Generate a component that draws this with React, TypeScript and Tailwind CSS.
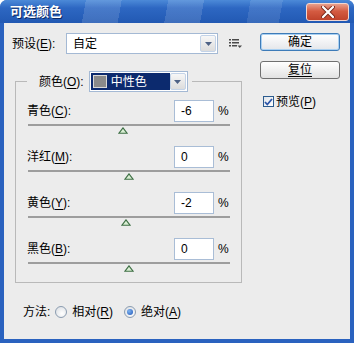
type SliderRow = {
  label: string;
  hotkey: string;
  value: string;
  thumbClass: string;
};

const rows: SliderRow[] = [
  { label: "青色", hotkey: "C", value: "-6", thumbClass: "ml-[91px]" },
  { label: "洋红", hotkey: "M", value: "0", thumbClass: "ml-[97px]" },
  { label: "黄色", hotkey: "Y", value: "-2", thumbClass: "ml-[94px]" },
  { label: "黑色", hotkey: "B", value: "0", thumbClass: "ml-[97px]" },
];

function Hotkey({ text, k }: { text: string; k: string }) {
  return (
    <span>
      {text}(<span className="underline underline-offset-2">{k}</span>)
    </span>
  );
}

function DropArrow() {
  return (
    <div className="flex h-full w-[16px] items-center justify-center rounded-[2px] border border-[#c3d3e8] bg-[linear-gradient(180deg,#f7f7f7,#dcdcdc)]">
      <svg width="7" height="4" viewBox="0 0 7 4">
        <path d="M0 0h7L3.5 4z" fill="#4d6185" />
      </svg>
    </div>
  );
}

function SliderBlock({ row }: { row: SliderRow }) {
  return (
    <div className="mb-[12px] last:mb-0">
      <div className="flex h-[22px] items-center">
        <div className="flex-1">
          <Hotkey text={row.label} k={row.hotkey} />:
        </div>
        <div className="flex h-[22px] w-[40px] items-center border border-[#a9bdd6] bg-white pl-[6px]">
          {row.value}
        </div>
        <div className="w-[16px] pl-[4px]">%</div>
      </div>
      <div className="ml-[1px] mt-[2px] h-[2px] w-[202px] bg-[#9d9d9d]" />
      <div className={`mt-[1px] h-[7px] ${row.thumbClass}`}>
        <svg width="10" height="7" viewBox="0 0 10 7" className="block">
          <path d="M5 0.8L9.2 6.3H0.8z" fill="#d9eed3" stroke="#3f7046" strokeWidth="1.1" />
        </svg>
      </div>
    </div>
  );
}

function Radio({ checked }: { checked: boolean }) {
  return (
    <div className="flex h-[12px] w-[12px] items-center justify-center rounded-full border border-[#8b9cb0] bg-[radial-gradient(circle_at_60%_65%,#ffffff,#d7dbe0)]">
      {checked && (
        <div className="h-[6px] w-[6px] rounded-full bg-[radial-gradient(circle_at_35%_35%,#7fb4f0,#1f55b8)]" />
      )}
    </div>
  );
}

export default function App() {
  return (
    <div className="flex h-[343px] w-[354px] flex-col overflow-hidden rounded-t-[7px] bg-[#2a62bf] font-['Liberation_Sans','Noto_Sans_CJK_SC',sans-serif] text-[12px] text-black">
      {/* title bar */}
      <div className="flex h-[23px] shrink-0 items-center justify-between bg-[linear-gradient(100deg,transparent_0_24%,rgba(255,255,255,0.13)_24%_34%,transparent_34%_47%,rgba(255,255,255,0.13)_47%_57%,transparent_57%_70%,rgba(255,255,255,0.1)_70%_79%,transparent_79%),linear-gradient(180deg,#4c8ad8_0%,#2d67c2_35%,#2259b3_100%)] pl-[10px] pr-[5px]">
        <span className="text-[13px] font-bold text-white [text-shadow:1px_1px_0_#0d2a63]">
          可选颜色
        </span>
        <div className="flex h-[18px] w-[43px] items-center justify-center rounded-[3px] border border-[#f2d6cf] bg-[linear-gradient(180deg,#e9a08c_0%,#d45b42_45%,#c0432c_100%)]">
          <svg width="14" height="12" viewBox="0 0 14 12">
            <path d="M2 1l10 10M12 1L2 11" stroke="#7a2a1c" strokeWidth="4" strokeLinecap="round" />
            <path d="M2 1l10 10M12 1L2 11" stroke="#ffffff" strokeWidth="2.2" strokeLinecap="round" />
          </svg>
        </div>
      </div>

      {/* client area */}
      <div className="mx-[4px] mb-[4px] flex flex-1 bg-[#ececec] pt-[10px]">
        <div className="w-[256px]">
          <div className="flex h-[21px] items-center">
            <div className="w-[62px] pl-[8px]">
              <Hotkey text="预设" k="E" />:
            </div>
            <div className="flex h-[21px] w-[152px] items-center border border-[#a4b9d4] bg-white pl-[6px] pr-[1px]">
              <span className="flex-1">自定</span>
              <div className="h-[17px]">
                <DropArrow />
              </div>
            </div>
            <svg width="13" height="9" viewBox="0 0 13 9" className="ml-[11px]">
              <g fill="#4a4a4a">
                <rect x="0" y="0" width="2" height="1.5" />
                <rect x="3" y="0" width="7" height="1.5" />
                <rect x="0" y="3" width="2" height="1.5" />
                <rect x="3" y="3" width="7" height="1.5" />
                <rect x="0" y="6" width="2" height="1.5" />
                <rect x="3" y="6" width="5" height="1.5" />
                <path d="M8.5 6.5h4.5L10.75 9z" />
              </g>
            </svg>
          </div>

          <fieldset className="ml-[11px] mt-[17px] w-[227px] border border-[#b9b9b9] px-[11px] pb-[10px] pt-[8px]">
            <legend className="flex h-[21px] items-center pl-[12px] pr-[4px]">
              <span className="mr-[5px]">
                <Hotkey text="颜色" k="O" />:
              </span>
              <div className="flex h-[21px] w-[99px] items-center border border-[#a4b9d4] bg-white p-[1px]">
                <div className="flex h-full flex-1 items-center bg-[#0c2a6e] pl-[2px]">
                  <div className="h-[13px] w-[14px] border border-[#d8d8d8] bg-[#8a8a8a]" />
                  <span className="ml-[4px] text-white">中性色</span>
                </div>
                <DropArrow />
              </div>
            </legend>
            {rows.map((row) => (
              <SliderBlock key={row.hotkey} row={row} />
            ))}
          </fieldset>

          <div className="mt-[22px] flex h-[14px] items-center pl-[19px]">
            <span>方法:</span>
            <div className="ml-[5px]">
              <Radio checked={false} />
            </div>
            <span className="ml-[5px]">
              <Hotkey text="相对" k="R" />
            </span>
            <div className="ml-[11px]">
              <Radio checked />
            </div>
            <span className="ml-[5px]">
              <Hotkey text="绝对" k="A" />
            </span>
          </div>
        </div>

        <div className="w-[80px]">
          <button className="flex h-[18px] w-[80px] items-center justify-center rounded-[3px] border border-[#3d7bb8] bg-[linear-gradient(180deg,#ffffff,#e4e6ea)] shadow-[inset_0_0_0_1px_#a9d0f2]">
            确定
          </button>
          <button className="mt-[10px] flex h-[18px] w-[80px] items-center justify-center rounded-[3px] border border-[#707070] bg-[linear-gradient(180deg,#ffffff,#e2e2e2)]">
            <span className="underline underline-offset-2">复位</span>
          </button>
          <div className="mt-[16px] flex h-[13px] items-center">
            <div className="ml-[3px] flex h-[11px] w-[11px] items-center justify-center border border-[#2b5b8e] bg-[linear-gradient(135deg,#e0e4ea,#ffffff)]">
              <svg width="9" height="8" viewBox="0 0 9 8">
                <path d="M1 4l2.3 2.5L8 1" fill="none" stroke="#2c55a8" strokeWidth="1.8" />
              </svg>
            </div>
            <span className="ml-[2px]">
              <Hotkey text="预览" k="P" />
            </span>
          </div>
        </div>
      </div>
    </div>
  );
}
